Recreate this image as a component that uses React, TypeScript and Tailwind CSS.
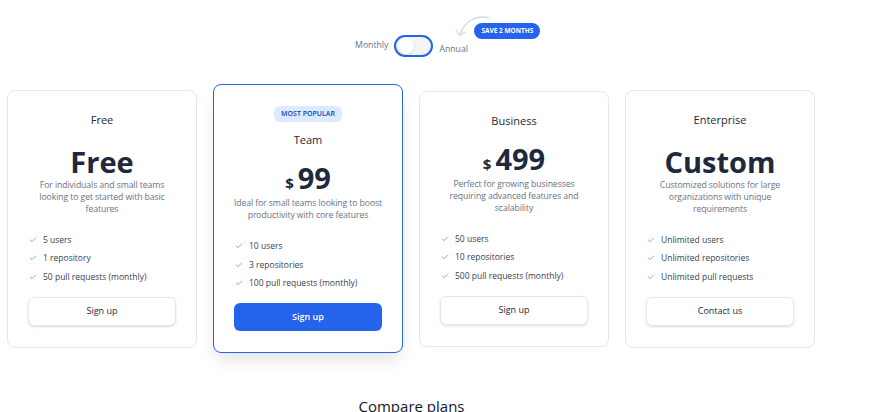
import React, { useState } from 'react'
import { Check } from 'lucide-react'

type Plan = {
  name: string
  price: string
  dollar?: boolean
  desc: string
  features: string[]
  cta: string
  popular?: boolean
}

const plans: Plan[] = [
  {
    name: 'Free',
    price: 'Free',
    desc: 'For individuals and small teams looking to get started with basic features',
    features: ['5 users', '1 repository', '50 pull requests (monthly)'],
    cta: 'Sign up',
  },
  {
    name: 'Team',
    price: '99',
    dollar: true,
    desc: 'Ideal for small teams looking to boost productivity with core features',
    features: ['10 users', '3 repositories', '100 pull requests (monthly)'],
    cta: 'Sign up',
    popular: true,
  },
  {
    name: 'Business',
    price: '499',
    dollar: true,
    desc: 'Perfect for growing businesses requiring advanced features and scalability',
    features: ['50 users', '10 repositories', '500 pull requests (monthly)'],
    cta: 'Sign up',
  },
  {
    name: 'Enterprise',
    price: 'Custom',
    desc: 'Customized solutions for large organizations with unique requirements',
    features: ['Unlimited users', 'Unlimited repositories', 'Unlimited pull requests'],
    cta: 'Contact us',
  },
]

function PlanCard({ plan }: { plan: Plan }) {
  return (
    <div
      className={
        plan.popular
          ? 'w-[190px] rounded-lg border-[1.5px] border-[#2563eb] bg-white px-[20px] pt-[21px] pb-[21px] shadow-[0_10px_18px_-4px_rgba(0,0,0,0.12)] flex flex-col items-center'
          : 'w-[190px] rounded-lg border border-gray-200 bg-white px-[20px] pt-[22px] pb-[21px] flex flex-col items-center'
      }
    >
      {plan.popular && (
        <span className='mb-[11px] rounded-md bg-[#dbeafe] px-[7px] py-[3px] text-[7px] font-semibold leading-[10px] text-[#1e40af]'>
          MOST POPULAR
        </span>
      )}
      <h3 className='text-[11px] leading-[14px] text-gray-800'>{plan.name}</h3>
      {plan.dollar ? (
        <div className='mt-[14px] flex items-baseline gap-[4px] text-[#1e293b]'>
          <span className='text-[15px] font-bold'>$</span>
          <span className='text-[29px] font-bold leading-[34px]'>{plan.price}</span>
        </div>
      ) : (
        <div className='mt-[18px] text-[29px] font-bold leading-[34px] text-[#1e293b]'>{plan.price}</div>
      )}
      <p
        className={
          plan.dollar
            ? '-mx-[4px] mt-[2px] text-center text-[8.7px] leading-[12px] tracking-[-0.1px] text-gray-500'
            : 'text-center text-[8.7px] leading-[12px] tracking-[-0.1px] text-gray-500'
        }
      >
        {plan.desc}
      </p>
      <ul className='mt-[19px] flex w-full flex-col gap-[6.5px] px-px'>
        {plan.features.map((f, i) => (
          <li key={i} className='flex items-center gap-[6px] text-[8.5px] leading-[12px] text-gray-700'>
            <Check size={8} strokeWidth={2} className='text-[#3b82f6]' />
            {f}
          </li>
        ))}
      </ul>
      <button
        className={
          plan.popular
            ? 'mt-[14px] h-[28px] w-full rounded-md bg-[#2563eb] text-[9px] font-semibold text-white'
            : 'mt-[14px] h-[29px] w-full rounded-md border border-gray-200 bg-white text-[9px] text-gray-800 shadow-sm'
        }
      >
        {plan.cta}
      </button>
    </div>
  )
}

export default function App() {
  const [annual, setAnnual] = useState(false)

  return (
    <div className="h-[412px] w-[883px] overflow-hidden bg-white" style={{ fontFamily: '"Open Sans", "Noto Sans", sans-serif' }}>
      <div className='w-[823px] px-[7px] pt-[34px]'>
        <div className='flex items-center justify-center gap-[6px]'>
          <span className='text-[8.7px] text-gray-500'>Monthly</span>
          <button
            onClick={() => setAnnual(!annual)}
            className='flex h-[22px] w-[39px] items-center rounded-full border-2 border-[#2563eb] bg-gray-100 px-[2px]'
          >
            <span className={annual ? 'ml-auto h-[16px] w-[16px] rounded-full bg-white shadow' : 'h-[16px] w-[16px] rounded-full bg-white shadow'} />
          </button>
          <div className='relative'>
            <span className='text-[8.7px] text-gray-500'>Annual</span>
            <svg className='absolute left-[14px] top-[-21px]' width='40' height='26' viewBox='0 0 40 26' fill='none'>
              <path d='M36 5 C 24 1, 11 8, 7 22' stroke='#d1d5db' strokeWidth='1.2' strokeLinecap='round' />
              <path d='M3 17 L7 22.5 L12 19' stroke='#d1d5db' strokeWidth='1.2' strokeLinecap='round' strokeLinejoin='round' />
            </svg>
            <span className='absolute left-[35px] top-[-11px] flex h-[16px] items-center whitespace-nowrap rounded-full bg-[#2563eb] px-[7px] text-[6.5px] font-bold text-white'>
              SAVE 2 MONTHS
            </span>
          </div>
        </div>

        <div className='mt-[26px] flex items-center gap-4'>
          {plans.map((p) => (
            <PlanCard key={p.name} plan={p} />
          ))}
        </div>

        <h2 className='mt-[42px] text-center text-[15px] font-medium text-gray-900'>Compare plans</h2>
      </div>
    </div>
  )
}
